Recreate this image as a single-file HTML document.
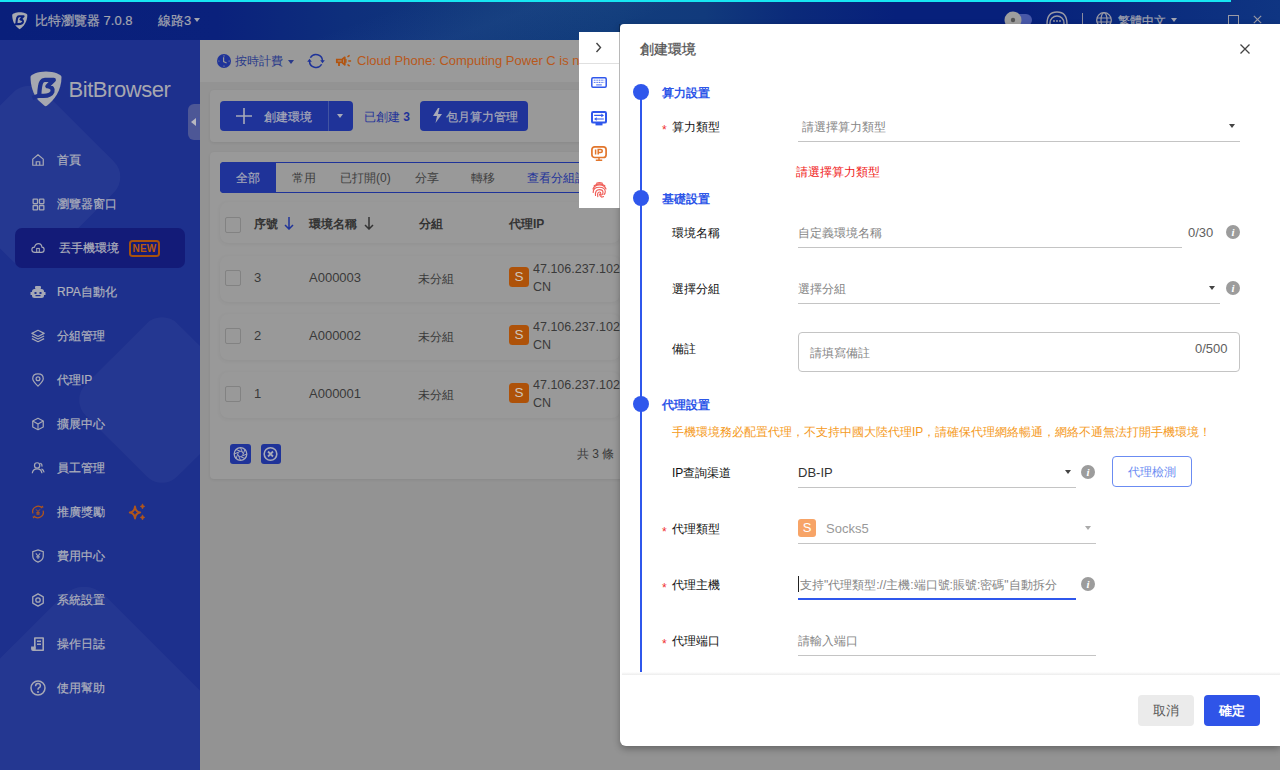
<!DOCTYPE html>
<html><head><meta charset="utf-8">
<style>
*{box-sizing:border-box;margin:0;padding:0}
html,body{width:1280px;height:770px;overflow:hidden}
body{position:relative;background:#939393;font-family:"Liberation Sans",sans-serif;font-size:13px;color:#333}
.a{position:absolute}
.t{position:absolute;white-space:nowrap;line-height:16px}
.card{position:absolute;background:#999;border-radius:4px;box-shadow:0 1px 3px rgba(0,0,0,.07)}
.row{position:absolute;left:220px;width:400px;background:#999;border-radius:8px;box-shadow:0 1px 4px rgba(0,0,0,.06)}
.lbl{position:absolute;left:672px;font-size:12px;color:#111;line-height:16px;white-space:nowrap}
.req{position:absolute;left:662px;color:#f03030;font-size:12px;line-height:12px}
.ph{position:absolute;font-size:12px;color:#858585;line-height:16px;white-space:nowrap}
.ul{position:absolute;height:1px;background:#c4c4c4}
.sec{position:absolute;left:662px;font-size:12px;font-weight:bold;color:#2d56e8;line-height:16px;white-space:nowrap}
.dot{position:absolute;left:633px;width:16px;height:16px;border-radius:50%;background:#2f57ec}
.info{position:absolute;width:14px;height:14px;border-radius:50%;background:#9c9c9c;color:#fff;font:italic bold 11px/14px "Liberation Serif",serif;text-align:center}
.caret{position:absolute;width:0;height:0;border-left:3.5px solid transparent;border-right:3.5px solid transparent;border-top:4px solid #444}
</style></head>
<body>
<div class="a" style="left:0;top:0;width:1280px;height:40px;background:linear-gradient(90deg,#091f7b 0%,#0a217c 17%,#0e2f7c 27%,#11397b 38%,#123d7c 48%,#113a7c 55%,#0b2a7a 62%,#07207b 70%,#07207b 80%,#0a2a7d 88%,#0f3582 100%)"></div>
<div class="a" style="left:0;top:0;width:1280px;height:40px;background:linear-gradient(160deg,rgba(255,255,255,0) 0%,rgba(255,255,255,0) 30%,rgba(120,170,220,.06) 40%,rgba(255,255,255,0) 50%)"></div>
<div class="a" style="left:0;top:0;width:1231px;height:2px;background:#17e6f2"></div>
<svg class="a" style="left:10px;top:9.5px" width="19.5" height="21.5" viewBox="0 0 40 44"><path d="M4.5 10 C4.5 7.5 12 4.5 20 4.5 C28 4.5 35.5 7.5 35.5 10 C35.5 24 28 33 21.2 38.6 C20.2 39.4 19.2 39.4 18.2 38.6 L12 33 C7 27 4.5 18 4.5 10 Z" fill="#a6a8b0"/><path d="M6.5 31 L13.2 28.6 C13.5 22 14 17 15.6 14.6 C16.4 13.3 17.4 12.9 19 12.9 L27.8 12.9 L21.4 19.2 C25.8 19.8 27.4 22 26.4 24.8 C25.2 27.8 20.5 29.6 13.2 28.6" stroke="#0a1f7d" stroke-width="4.3" fill="none" stroke-linejoin="round"/></svg>
<div class="t" style="left:35px;top:13px;color:#a3a5b0;font-size:13px;-webkit-text-stroke:.2px #a3a5b0">比特瀏覽器 7.0.8</div>
<div class="t" style="left:158px;top:13px;color:#a3a5b0;font-size:13px;-webkit-text-stroke:.2px #a3a5b0">線路3</div>
<div class="caret" style="left:194px;top:18px;border-top-color:#a3a5b0;border-left-width:3.5px;border-right-width:3.5px;border-top-width:4px"></div>
<svg class="a" style="left:1004px;top:11px" width="29" height="13" viewBox="0 0 29 13"><rect x="8" y="3" width="20" height="12" rx="6" fill="#4858a8"/><circle cx="9" cy="9" r="8.5" fill="#9e9e9e"/><circle cx="9" cy="9" r="2.2" fill="#555"/></svg>
<svg class="a" style="left:1045px;top:11px" width="24" height="13" viewBox="0 0 24 13"><path d="M2 13 Q2 1 12 1 Q22 1 22 13" stroke="#9a9aa5" stroke-width="1.4" fill="none"/><circle cx="12" cy="12" r="7" stroke="#9a9aa5" stroke-width="1.4" fill="none"/><circle cx="9" cy="10" r=".9" fill="#9a9aa5"/><circle cx="12" cy="10" r=".9" fill="#9a9aa5"/><circle cx="15" cy="10" r=".9" fill="#9a9aa5"/></svg>
<div class="a" style="left:1082px;top:13px;width:1px;height:11px;background:#8a8ca0"></div>
<svg class="a" style="left:1096px;top:12px" width="16" height="12" viewBox="0 0 16 12"><circle cx="8" cy="8" r="7.3" stroke="#9a9aa5" stroke-width="1.3" fill="none"/><ellipse cx="8" cy="8" rx="3" ry="7.3" stroke="#9a9aa5" stroke-width="1.2" fill="none"/><path d="M1 6 H15 M1 10 H15" stroke="#9a9aa5" stroke-width="1.2"/></svg>
<div class="t" style="left:1118px;top:13px;color:#a3a5b0;font-size:12.3px;-webkit-text-stroke:.2px #a3a5b0">繁體中文</div>
<div class="caret" style="left:1171px;top:18px;border-top-color:#a3a5b0"></div>
<div class="a" style="left:1228px;top:15px;width:11px;height:12px;border:1.3px solid #9a9aa5"></div>
<svg class="a" style="left:1252px;top:15px" width="11" height="9" viewBox="0 0 11 11"><path d="M1 1 L10 10 M10 1 L1 10" stroke="#9a9aa5" stroke-width="1.4"/></svg>
<div class="a" style="left:0;top:40px;width:200px;height:730px;background:#1d308d;overflow:hidden">
<div class="a" style="left:-42px;top:66px;width:142px;height:142px;transform:rotate(45deg);border-radius:22px;background:rgba(255,255,255,.04)"></div>
<div class="a" style="left:97px;top:295px;width:130px;height:130px;transform:rotate(45deg);border-radius:22px;background:rgba(255,255,255,.035)"></div>
<div class="a" style="left:-26px;top:580px;width:220px;height:220px;transform:rotate(45deg);border-radius:30px;background:rgba(255,255,255,.035)"></div>
</div>
<div class="a" style="left:15px;top:228px;width:170px;height:40px;border-radius:7px;background:#131b78"></div>
<svg class="a" style="left:26px;top:66.5px" width="40" height="44" viewBox="0 0 40 44"><path d="M4.5 10 C4.5 7.5 12 4.5 20 4.5 C28 4.5 35.5 7.5 35.5 10 C35.5 24 28 33 21.2 38.6 C20.2 39.4 19.2 39.4 18.2 38.6 L12 33 C7 27 4.5 18 4.5 10 Z" fill="#a6a8b0"/><path d="M6.5 31 L13.2 28.6 C13.5 22 14 17 15.6 14.6 C16.4 13.3 17.4 12.9 19 12.9 L27.8 12.9 L21.4 19.2 C25.8 19.8 27.4 22 26.4 24.8 C25.2 27.8 20.5 29.6 13.2 28.6" stroke="#1d308d" stroke-width="4.3" fill="none" stroke-linejoin="round"/></svg>
<div class="t" style="left:68.5px;top:77.5px;font-size:22px;line-height:24px;letter-spacing:-.45px;color:#a6a7b0">BitBrowser</div>
<div class="a" style="left:188px;top:104px;width:12px;height:36px;border-radius:6px 0 0 6px;background:#4d5796"></div>
<div class="a" style="left:196px;top:117px;width:3px;height:10px;background:#4a55a0;opacity:.6"></div>
<div class="a" style="left:191px;top:118px;width:0;height:0;border-top:4px solid transparent;border-bottom:4px solid transparent;border-right:5px solid #b8b8c0"></div>
<svg class="a" style="left:31.0px;top:153.0px" width="14" height="14" viewBox="0 0 16 16"><path d="M2 7 L8 2 L14 7 V14 H2 Z" stroke="#a6a8b5" stroke-width="1.4" fill="none" stroke-linejoin="round"/><path d="M6 14 V10 H10 V14" stroke="#a6a8b5" stroke-width="1.4" fill="none"/></svg>
<div class="t" style="left:57px;top:152px;font-size:12px;-webkit-text-stroke:.2px #aeb0bc;color:#aeb0bc">首頁</div>
<svg class="a" style="left:31.5px;top:197.5px" width="13" height="13" viewBox="0 0 16 16"><rect x="1.4" y="1.4" width="5.4" height="5.4" rx=".6" stroke="#a6a8b5" stroke-width="1.6" fill="none"/><rect x="9.2" y="1.4" width="5.4" height="5.4" rx=".6" stroke="#a6a8b5" stroke-width="1.6" fill="none"/><rect x="1.4" y="9.2" width="5.4" height="5.4" rx=".6" stroke="#a6a8b5" stroke-width="1.6" fill="none"/><rect x="9.2" y="9.2" width="5.4" height="5.4" rx=".6" stroke="#a6a8b5" stroke-width="1.6" fill="none"/></svg>
<div class="t" style="left:57px;top:196px;font-size:12px;-webkit-text-stroke:.2px #aeb0bc;color:#aeb0bc">瀏覽器窗口</div>
<svg class="a" style="left:31.0px;top:241.0px" width="14" height="14" viewBox="0 0 16 16"><path d="M4.5 13 Q1 13 1 10 Q1 7 4 7 Q5 3 8.5 3 Q12 3 12.5 7 Q15 7 15 10 Q15 13 12 13 Z" stroke="#a6a8b5" stroke-width="1.3" fill="none"/><rect x="6.5" y="8.5" width="3" height="4.5" stroke="#a6a8b5" stroke-width="1.2" fill="none"/></svg>
<div class="t" style="left:59px;top:240px;font-size:12px;-webkit-text-stroke:.2px #aeb0bc;color:#aeb0bc">丟手機環境</div>
<svg class="a" style="left:30.0px;top:284.0px" width="16" height="16" viewBox="0 0 16 16"><rect x="2" y="5" width="12" height="9" rx="2.5" fill="#a6a8b5"/><rect x="5" y="2" width="6" height="3" rx="1" fill="#a6a8b5"/><rect x="0.5" y="8" width="2" height="3" fill="#a6a8b5"/><rect x="13.5" y="8" width="2" height="3" fill="#a6a8b5"/><rect x="4.5" y="8" width="2" height="2" fill="#1f3190"/><rect x="9.5" y="8" width="2" height="2" fill="#1f3190"/><rect x="5.5" y="11" width="5" height="1.2" fill="#1f3190"/></svg>
<div class="t" style="left:57px;top:284px;font-size:12px;-webkit-text-stroke:.2px #aeb0bc;color:#aeb0bc">RPA自動化</div>
<svg class="a" style="left:31.0px;top:329.0px" width="14" height="14" viewBox="0 0 16 16"><path d="M8 1.5 L15 5 L8 8.5 L1 5 Z" stroke="#a6a8b5" stroke-width="1.4" fill="none" stroke-linejoin="round"/><path d="M1 8 L8 11.5 L15 8 M1 11 L8 14.5 L15 11" stroke="#a6a8b5" stroke-width="1.4" fill="none" stroke-linejoin="round"/></svg>
<div class="t" style="left:57px;top:328px;font-size:12px;-webkit-text-stroke:.2px #aeb0bc;color:#aeb0bc">分組管理</div>
<svg class="a" style="left:31.0px;top:373.0px" width="14" height="14" viewBox="0 0 16 16"><path d="M8 15 Q2 9 2 6.5 Q2 1 8 1 Q14 1 14 6.5 Q14 9 8 15 Z" stroke="#a6a8b5" stroke-width="1.4" fill="none"/><circle cx="8" cy="6.5" r="2.2" stroke="#a6a8b5" stroke-width="1.4" fill="none"/></svg>
<div class="t" style="left:57px;top:372px;font-size:12px;-webkit-text-stroke:.2px #aeb0bc;color:#aeb0bc">代理IP</div>
<svg class="a" style="left:31.0px;top:417.0px" width="14" height="14" viewBox="0 0 16 16"><path d="M8 1.5 L14 4.5 V11.5 L8 14.5 L2 11.5 V4.5 Z" stroke="#a6a8b5" stroke-width="1.4" fill="none" stroke-linejoin="round"/><path d="M2 4.5 L8 8 L14 4.5 M8 8 V14.5" stroke="#a6a8b5" stroke-width="1.3" fill="none"/></svg>
<div class="t" style="left:57px;top:416px;font-size:12px;-webkit-text-stroke:.2px #aeb0bc;color:#aeb0bc">擴展中心</div>
<svg class="a" style="left:31.0px;top:461.0px" width="14" height="14" viewBox="0 0 16 16"><circle cx="7" cy="5" r="3" stroke="#a6a8b5" stroke-width="1.4" fill="none"/><path d="M1.5 14 Q2 9 7 9 Q12 9 12.5 14" stroke="#a6a8b5" stroke-width="1.4" fill="none"/><path d="M10.5 2.5 Q13 3 12.5 6.5 M12 9 Q14.5 10 15 13" stroke="#a6a8b5" stroke-width="1.3" fill="none"/></svg>
<div class="t" style="left:57px;top:460px;font-size:12px;-webkit-text-stroke:.2px #aeb0bc;color:#aeb0bc">員工管理</div>
<svg class="a" style="left:31.0px;top:505.0px" width="14" height="14" viewBox="0 0 16 16"><path d="M2.2 9.5 A6.2 6.2 0 0 1 12.8 3.6" stroke="#b0561c" stroke-width="1.4" fill="none"/><path d="M13.8 6.5 A6.2 6.2 0 0 1 3.2 12.4" stroke="#b0561c" stroke-width="1.4" fill="none"/><path d="M11.2 2.2 L14.2 3.2 L13.6 0.6 Z M4.8 13.8 L1.8 12.8 L2.4 15.4 Z" fill="#b0561c"/><path d="M5.8 5 L8 7.6 L10.2 5 M8 7.6 V11.5 M6 8.8 H10 M6 10.3 H10" stroke="#b0561c" stroke-width="1.1" fill="none"/></svg>
<div class="t" style="left:57px;top:504px;font-size:12px;-webkit-text-stroke:.2px #aeb0bc;color:#aeb0bc">推廣獎勵</div>
<svg class="a" style="left:31.0px;top:549.0px" width="14" height="14" viewBox="0 0 16 16"><path d="M8 1 L14 3 V8 Q14 13 8 15 Q2 13 2 8 V3 Z" stroke="#a6a8b5" stroke-width="1.4" fill="none"/><path d="M5.5 5 L8 8 L10.5 5 M8 8 V11.5 M6 9 H10" stroke="#a6a8b5" stroke-width="1.2" fill="none"/></svg>
<div class="t" style="left:57px;top:548px;font-size:12px;-webkit-text-stroke:.2px #aeb0bc;color:#aeb0bc">費用中心</div>
<svg class="a" style="left:31.0px;top:593.0px" width="14" height="14" viewBox="0 0 16 16"><path d="M8 1 L14 4.5 V11.5 L8 15 L2 11.5 V4.5 Z" stroke="#a6a8b5" stroke-width="1.5" fill="none" stroke-linejoin="round"/><circle cx="8" cy="8" r="2.5" stroke="#a6a8b5" stroke-width="1.5" fill="none"/></svg>
<div class="t" style="left:57px;top:592px;font-size:12px;-webkit-text-stroke:.2px #aeb0bc;color:#aeb0bc">系統設置</div>
<svg class="a" style="left:30.0px;top:636.0px" width="16" height="16" viewBox="0 0 16 16"><path d="M4.8 12.5 V2 H13.2 V14.2 H3.5" stroke="#a6a8b5" stroke-width="1.6" fill="none" stroke-linejoin="round"/><path d="M7 5.2 H11 M7 8.2 H11" stroke="#a6a8b5" stroke-width="1.5"/><path d="M1.8 11.2 H5 V14.2 H3 Q1.8 14.2 1.8 13 Z" stroke="#a6a8b5" stroke-width="1.4" fill="#a6a8b5"/></svg>
<div class="t" style="left:57px;top:636px;font-size:12px;-webkit-text-stroke:.2px #aeb0bc;color:#aeb0bc">操作日誌</div>
<svg class="a" style="left:30.0px;top:680.0px" width="16" height="16" viewBox="0 0 16 16"><circle cx="8" cy="8" r="7" stroke="#a6a8b5" stroke-width="1.5" fill="none"/><path d="M5.6 6.3 Q5.6 3.6 8 3.6 Q10.4 3.6 10.4 5.8 Q10.4 7.3 8.7 8 Q8 8.4 8 9.8" stroke="#a6a8b5" stroke-width="1.5" fill="none"/><circle cx="8" cy="12" r="1" fill="#a6a8b5"/></svg>
<div class="t" style="left:57px;top:680px;font-size:12px;-webkit-text-stroke:.2px #aeb0bc;color:#aeb0bc">使用幫助</div>
<div class="a" style="left:129px;top:240px;width:30.5px;height:16.5px;border:2px solid #a6510e;border-radius:3.5px;color:#b8590f;font-weight:bold;font-size:10px;line-height:13px;text-align:center;letter-spacing:.2px;padding-left:.5px">NEW</div>
<svg class="a" style="left:128px;top:503px" width="19" height="19" viewBox="0 0 19 19"><path d="M7 3.5 Q7.6 9 12.2 9.5 Q7.6 10 7 15.5 Q6.4 10 1.8 9.5 Q6.4 9 7 3.5Z" stroke="#b0561c" stroke-width="2" fill="none" stroke-linejoin="round"/><path d="M14.5 0.8 Q14.9 3 16.8 3.4 Q14.9 3.8 14.5 6 Q14.1 3.8 12.2 3.4 Q14.1 3 14.5 0.8Z" fill="#b0561c" stroke="#b0561c" stroke-width=".6"/><path d="M14.5 11.8 Q14.9 14 16.8 14.4 Q14.9 14.8 14.5 17 Q14.1 14.8 12.2 14.4 Q14.1 14 14.5 11.8Z" fill="#b0561c" stroke="#b0561c" stroke-width=".6"/></svg>
<div class="a" style="left:200px;top:40px;width:420px;height:42px;background:#9a9a9a"></div>
<svg class="a" style="left:217px;top:54px" width="14" height="14" viewBox="0 0 14 14"><circle cx="7" cy="7" r="7" fill="#1f3399"/><path d="M6.6 3.2 V7.6 L9.6 9" stroke="#9a9a9a" stroke-width="1.2" fill="none"/><circle cx="7" cy="1.9" r=".6" fill="#9a9a9a"/><circle cx="7" cy="12.1" r=".6" fill="#9a9a9a"/><circle cx="1.9" cy="7" r=".6" fill="#9a9a9a"/><circle cx="12.1" cy="7" r=".6" fill="#9a9a9a"/></svg>
<div class="t" style="left:235px;top:53px;color:#2a3a8a;font-size:12px;font-weight:500">按時計費</div>
<div class="caret" style="left:288px;top:60px;border-top-color:#2a3a8a"></div>
<svg class="a" style="left:307px;top:52.5px" width="18" height="16" viewBox="0 0 18 16"><path d="M3.37 4.75 A6.5 6.5 0 0 1 15.5 8" stroke="#1f3399" stroke-width="1.5" fill="none"/><path d="M14.63 11.25 A6.5 6.5 0 0 1 2.5 8" stroke="#1f3399" stroke-width="1.5" fill="none"/><path d="M13.2 7.2 H17.8 L15.5 10.2 Z" fill="#1f3399"/><path d="M0.2 8.8 H4.8 L2.5 5.8 Z" fill="#1f3399"/></svg>
<svg class="a" style="left:330px;top:50px" width="30" height="22" viewBox="0 0 30 22"><g stroke="#b2540f" fill="none"><rect x="6.8" y="9.6" width="5.6" height="2.7" stroke-width="1.7"/><path d="M12.4 9.1 L14.8 7.3 V14.8 L12.4 12.9" stroke-width="1.7" stroke-linejoin="round"/><path d="M15.9 9.1 V12.8" stroke-width="1.3"/><path d="M9 12.5 V16" stroke-width="1.8"/><path d="M17.5 6.9 L19.6 5.4 M18.3 10.9 H21.1 M17.5 14.5 L19.6 16.1" stroke-width="1.5"/></g></svg>
<div class="t" style="left:357px;top:53px;color:#b8581a;font-size:13px">Cloud Phone: Computing Power C is not</div>
<div class="card" style="left:210px;top:90px;width:420px;height:52px"></div>
<div class="a" style="left:220px;top:101px;width:133px;height:30px;border-radius:4px;background:#1f3399"></div>
<div class="a" style="left:328px;top:101px;width:1px;height:30px;background:#5a6aa8;opacity:.6"></div>
<svg class="a" style="left:236px;top:108px" width="16" height="16" viewBox="0 0 16 16"><path d="M8 0 V16 M0 8 H16" stroke="#a8aab8" stroke-width="1.6"/></svg>
<div class="t" style="left:264px;top:109px;color:#a8aab8;font-size:12px;-webkit-text-stroke:.2px #a8aab8">創建環境</div>
<div class="caret" style="left:337px;top:114px;border-top-color:#a8aab8"></div>
<div class="t" style="left:364px;top:109px;color:#1f3399;font-size:12px;font-weight:500">已創建 <b>3</b></div>
<div class="a" style="left:420px;top:101px;width:108px;height:30px;border-radius:4px;background:#1f3399"></div>
<svg class="a" style="left:432px;top:108px" width="11" height="15" viewBox="0 0 11 15"><path d="M6 0 L1 8 H5 L3.5 15 L10 6 H6 L7.5 0 Z" fill="#a8aab8"/></svg>
<div class="t" style="left:446px;top:109px;color:#a8aab8;font-size:12px;-webkit-text-stroke:.2px #a8aab8">包月算力管理</div>
<div class="card" style="left:210px;top:152px;width:420px;height:327px"></div>
<div class="a" style="left:220px;top:162px;width:400px;height:31px;border:1.5px solid #1f3399;border-right:none;border-radius:4px 0 0 4px"></div>
<div class="a" style="left:220px;top:162px;width:56px;height:31px;background:#1f3399;border-radius:4px 0 0 4px"></div>
<div class="t" style="left:236px;top:170px;font-size:12px;color:#a8aab8;-webkit-text-stroke:.2px #a8aab8">全部</div>
<div class="t" style="left:292px;top:170px;font-size:12px;color:#404040">常用</div>
<div class="t" style="left:340px;top:170px;font-size:12px;color:#404040">已打開(0)</div>
<div class="t" style="left:415px;top:170px;font-size:12px;color:#404040">分享</div>
<div class="t" style="left:471px;top:170px;font-size:12px;color:#404040">轉移</div>
<div class="t" style="left:527px;top:170px;font-size:12px;color:#1f3399">查看分組詳情</div>
<div class="row" style="top:202px;height:41px"></div>
<div class="a" style="left:225px;top:217px;width:16px;height:16px;border:1px solid #828282;border-radius:2px"></div>
<div class="t" style="left:254px;top:216px;color:#333;font-size:12px;font-weight:bold">序號</div>
<svg class="a" style="left:284px;top:216px" width="10" height="14" viewBox="0 0 10 14"><path d="M5 1 V13 M1 9 L5 13 L9 9" stroke="#1f3399" stroke-width="1.5" fill="none"/></svg>
<div class="t" style="left:309px;top:216px;color:#333;font-size:12px;font-weight:bold">環境名稱</div>
<svg class="a" style="left:364px;top:216px" width="10" height="14" viewBox="0 0 10 14"><path d="M5 1 V13 M1 9 L5 13 L9 9" stroke="#333" stroke-width="1.5" fill="none"/></svg>
<div class="t" style="left:419px;top:216px;color:#333;font-size:12px;font-weight:bold">分組</div>
<div class="t" style="left:509px;top:216px;color:#333;font-size:12px;font-weight:bold">代理IP</div>
<div class="row" style="top:256px;height:46px"></div>
<div class="a" style="left:225px;top:270px;width:16px;height:16px;border:1px solid #828282;border-radius:2px"></div>
<div class="t" style="left:254px;top:270px;color:#3a3a3a">3</div>
<div class="t" style="left:309px;top:270px;color:#3a3a3a">A000003</div>
<div class="t" style="left:418px;top:271px;color:#3a3a3a;font-size:12px">未分組</div>
<div class="a" style="left:509px;top:266.5px;width:20px;height:20.5px;border-radius:3.5px;background:#ae5209;color:#cfc6bc;font-size:13.5px;line-height:20px;text-align:center">S</div>
<div class="t" style="left:533px;top:261px;color:#3a3a3a;font-size:12.5px">47.106.237.102</div>
<div class="t" style="left:533px;top:279px;color:#3a3a3a;font-size:12.5px">CN</div>
<div class="row" style="top:314px;height:46px"></div>
<div class="a" style="left:225px;top:328px;width:16px;height:16px;border:1px solid #828282;border-radius:2px"></div>
<div class="t" style="left:254px;top:328px;color:#3a3a3a">2</div>
<div class="t" style="left:309px;top:328px;color:#3a3a3a">A000002</div>
<div class="t" style="left:418px;top:329px;color:#3a3a3a;font-size:12px">未分組</div>
<div class="a" style="left:509px;top:324.5px;width:20px;height:20.5px;border-radius:3.5px;background:#ae5209;color:#cfc6bc;font-size:13.5px;line-height:20px;text-align:center">S</div>
<div class="t" style="left:533px;top:319px;color:#3a3a3a;font-size:12.5px">47.106.237.102</div>
<div class="t" style="left:533px;top:337px;color:#3a3a3a;font-size:12.5px">CN</div>
<div class="row" style="top:372px;height:46px"></div>
<div class="a" style="left:225px;top:386px;width:16px;height:16px;border:1px solid #828282;border-radius:2px"></div>
<div class="t" style="left:254px;top:386px;color:#3a3a3a">1</div>
<div class="t" style="left:309px;top:386px;color:#3a3a3a">A000001</div>
<div class="t" style="left:418px;top:387px;color:#3a3a3a;font-size:12px">未分組</div>
<div class="a" style="left:509px;top:382.5px;width:20px;height:20.5px;border-radius:3.5px;background:#ae5209;color:#cfc6bc;font-size:13.5px;line-height:20px;text-align:center">S</div>
<div class="t" style="left:533px;top:377px;color:#3a3a3a;font-size:12.5px">47.106.237.102</div>
<div class="t" style="left:533px;top:395px;color:#3a3a3a;font-size:12.5px">CN</div>
<div class="a" style="left:230px;top:444px;width:21px;height:20px;border-radius:3px;background:#1f3399"></div>
<svg class="a" style="left:232px;top:446px" width="17" height="16" viewBox="0 0 17 16"><circle cx="8.5" cy="8" r="6.3" stroke="#a8aab8" stroke-width="1.3" fill="none"/><path d="M8.50 1.70 L11.06 7.55 M12.95 3.55 L10.63 9.49 M14.80 8.00 L8.95 10.56 M12.95 12.45 L7.01 10.13 M8.50 14.30 L5.94 8.45 M4.05 12.45 L6.37 6.51 M2.20 8.00 L8.05 5.44 M4.05 3.55 L9.99 5.87" stroke="#a8aab8" stroke-width="1" fill="none"/></svg>
<div class="a" style="left:261px;top:444px;width:20px;height:20px;border-radius:3px;background:#1f3399"></div>
<svg class="a" style="left:262px;top:446px" width="17" height="16" viewBox="0 0 17 16"><circle cx="8.5" cy="8" r="6.3" stroke="#a8aab8" stroke-width="1.6" fill="none"/><path d="M6 5.5 L11 10.5 M11 5.5 L6 10.5" stroke="#a8aab8" stroke-width="1.8"/></svg>
<div class="t" style="left:577px;top:446px;color:#3a3a3a;font-size:12px">共 3 條</div>
<div class="a" style="left:620px;top:24px;width:660px;height:722px;background:#fff;border-radius:4px 0 0 6px;box-shadow:0 3px 7px rgba(0,0,0,.3)"></div>
<div class="t" style="left:640px;top:41px;font-size:14px;line-height:17px;color:#555;-webkit-text-stroke:.3px #555">創建環境</div>
<svg class="a" style="left:1240px;top:44px" width="10" height="10" viewBox="0 0 10 10"><path d="M0.5 0.5 L9.5 9.5 M9.5 0.5 L0.5 9.5" stroke="#444" stroke-width="1.3"/></svg>
<div class="a" style="left:640px;top:92px;width:2px;height:583px;background:#2f57ec"></div>
<div class="dot" style="top:84px"></div>
<div class="dot" style="top:190px"></div>
<div class="dot" style="top:396px"></div>
<div class="sec" style="top:85px;">算力設置</div>
<div class="req" style="top:124px">*</div>
<div class="lbl" style="top:119px;">算力類型</div>
<div class="ph" style="top:119px;left:802px">請選擇算力類型</div>
<div class="caret" style="left:1229px;top:124px"></div>
<div class="ul" style="left:798px;top:141px;width:442px"></div>
<div class="t" style="top:164px;left:796px;color:#f01818;font-size:12px">請選擇算力類型</div>
<div class="sec" style="top:191px;">基礎設置</div>
<div class="lbl" style="top:225px;">環境名稱</div>
<div class="ph" style="top:225px;left:798px">自定義環境名稱</div>
<div class="ul" style="left:798px;top:247px;width:384px"></div>
<div class="t" style="top:225px;left:1188px;color:#606060">0/30</div>
<div class="info" style="left:1226px;top:225px">i</div>
<div class="lbl" style="top:281px;">選擇分組</div>
<div class="ph" style="top:281px;left:798px">選擇分組</div>
<div class="caret" style="left:1209px;top:286px"></div>
<div class="ul" style="left:798px;top:303px;width:422px"></div>
<div class="info" style="left:1226px;top:281px">i</div>
<div class="lbl" style="top:341px;">備註</div>
<div class="a" style="left:798px;top:332px;width:442px;height:40px;border:1px solid #c4c4c4;border-radius:4px"></div>
<div class="ph" style="top:345px;left:810px">請填寫備註</div>
<div class="t" style="top:341px;left:1195px;color:#606060">0/500</div>
<div class="sec" style="top:397px;">代理設置</div>
<div class="t" style="top:424px;left:672px;color:#f59a23;font-size:12px">手機環境務必配置代理，不支持中國大陸代理IP，請確保代理網絡暢通，網絡不通無法打開手機環境！</div>
<div class="lbl" style="top:465px;">IP查詢渠道</div>
<div class="t" style="top:465px;left:798px;color:#333">DB-IP</div>
<div class="caret" style="left:1065px;top:470px"></div>
<div class="ul" style="left:798px;top:487px;width:278px"></div>
<div class="info" style="left:1081px;top:465px">i</div>
<div class="a" style="left:1112px;top:456px;width:80px;height:31px;border:1px solid #6b8cf2;border-radius:4px;color:#6b8cf2;text-align:center;line-height:31px;font-size:12px">代理檢測</div>
<div class="req" style="top:526px">*</div>
<div class="lbl" style="top:521px;">代理類型</div>
<div class="a" style="left:798px;top:519px;width:18px;height:18px;border-radius:3px;background:#f7a467;color:#fff;font-size:13px;line-height:18px;text-align:center">S</div>
<div class="t" style="top:521px;left:826px;color:#999">Socks5</div>
<div class="caret" style="left:1085px;top:526px;border-top-color:#aaa"></div>
<div class="ul" style="left:798px;top:543px;width:298px"></div>
<div class="req" style="top:582px">*</div>
<div class="lbl" style="top:577px;">代理主機</div>
<div class="a" style="left:798px;top:576px;width:1px;height:16px;background:#222"></div>
<div class="ph" style="top:577px;left:800px">支持"代理類型://主機:端口號:賬號:密碼"自動拆分</div>
<div class="a" style="left:798px;top:598px;width:278px;height:2px;background:#2f57ec"></div>
<div class="info" style="left:1081px;top:577px">i</div>
<div class="req" style="top:638px">*</div>
<div class="lbl" style="top:633px;">代理端口</div>
<div class="ph" style="top:633px;left:798px">請輸入端口</div>
<div class="ul" style="left:798px;top:655px;width:298px"></div>
<div class="a" style="left:622px;top:672px;width:658px;height:3px;background:linear-gradient(#fff,#ececec)"></div>
<div class="a" style="left:1138px;top:695px;width:56px;height:31px;border-radius:4px;background:#ebebeb;color:#555;text-align:center;line-height:31px">取消</div>
<div class="a" style="left:1204px;top:695px;width:56px;height:31px;border-radius:4px;background:#2f54e8;color:#fff;text-align:center;line-height:31px;font-weight:bold">確定</div>
<div class="a" style="left:579px;top:32px;width:41px;height:176px;background:#fff"></div>
<div class="a" style="left:619px;top:24px;width:1px;height:184px;background:rgba(0,0,0,.28)"></div>
<div class="a" style="left:579px;top:63px;width:40px;height:1px;background:#e0e0e0"></div>
<svg class="a" style="left:595px;top:42px" width="7" height="11" viewBox="0 0 7 11"><path d="M1.5 1 L5.5 5.5 L1.5 10" stroke="#444" stroke-width="1.4" fill="none"/></svg>
<svg class="a" style="left:591px;top:77px" width="16" height="11" viewBox="0 0 16 11"><rect x="0.8" y="0.8" width="14.4" height="9.4" rx="1.2" stroke="#2f57ec" stroke-width="1.5" fill="none"/><path d="M2.8 3.2 H13.2 M2.8 5.4 H13.2" stroke="#2f57ec" stroke-width=".9" stroke-dasharray="1.1 .6"/><path d="M5.2 7.9 H10.8" stroke="#2f57ec" stroke-width=".9"/></svg>
<svg class="a" style="left:591px;top:111px" width="16" height="15" viewBox="0 0 16 15"><rect x="1" y="1" width="14" height="10.6" rx="1.2" stroke="#2f57ec" stroke-width="2" fill="none"/><path d="M4.5 13.2 H11.5" stroke="#2f57ec" stroke-width="2.4"/><path d="M3.2 4.4 H10.8 M12.8 8 H5.2" stroke="#2f57ec" stroke-width="1.2" fill="none"/><path d="M10.3 2.6 L13 4.4 L10.3 6.2 Z M5.7 6.2 L3 8 L5.7 9.8 Z" fill="#2f57ec"/></svg>
<svg class="a" style="left:591px;top:145.5px" width="16" height="16" viewBox="0 0 16 16"><rect x="0.9" y="0.9" width="14.2" height="10.6" rx="2.8" stroke="#e2762c" stroke-width="1.7" fill="none"/><path d="M4.6 3.6 V8.6 M7.2 8.6 V3.6 H9.6 Q11.3 3.6 11.3 5.1 Q11.3 6.6 9.6 6.6 H7.2" stroke="#e2762c" stroke-width="1.5" fill="none"/><path d="M8 11.5 V13.6 M4.8 14.3 H11.2" stroke="#e2762c" stroke-width="1.4"/></svg>
<svg class="a" style="left:592px;top:182px" width="15" height="16" viewBox="0 0 15 16"><g stroke="#f0605a" stroke-width="1.15" fill="none" stroke-linecap="round"><path d="M4.5 1.2 Q7.5 0 10.5 1.2"/><path d="M2.2 3.8 Q7.5 -0.2 12.8 3.8"/><path d="M1 7 Q2.5 2.8 7.5 2.8 Q12.5 2.8 14 7"/><path d="M1.2 10.5 Q1 5.2 7.5 5.2 Q13 5.2 13.3 9.5 Q13.3 11.5 12 12.5"/><path d="M3.5 13.5 Q2.8 7.6 7.5 7.6 Q11 7.6 11 10.5 Q11 12.5 9.5 13 Q8.5 13.3 8.5 12"/><path d="M5.8 14.6 Q5 10 7.5 10 Q8.8 10 8.8 11.5"/><path d="M7.5 12 Q7.6 14 9.5 15"/><path d="M11.5 14.5 Q10.5 15.2 10 15"/></g></svg>
</body></html>
